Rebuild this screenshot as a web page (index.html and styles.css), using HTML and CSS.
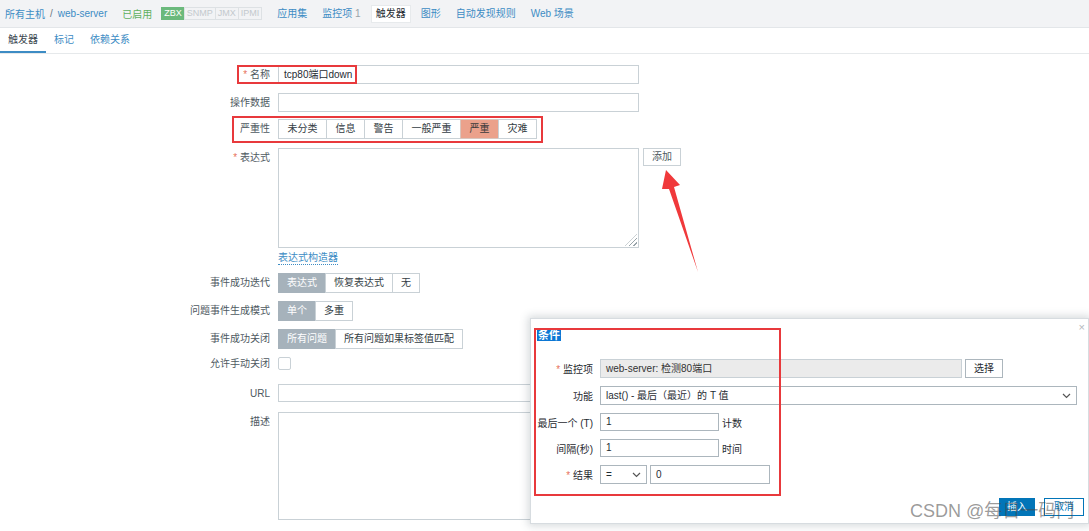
FILE: index.html
```html
<!DOCTYPE html>
<html lang="zh-CN">
<head>
<meta charset="utf-8">
<title>触发器</title>
<link rel="stylesheet" href="styles.css">
</head>
<body>
<header class="hostnav">
  <a class="crumb">所有主机</a><span class="sep">/</span><a class="crumb">web-server</a>
  <span class="status">已启用</span>
  <span class="badges"><span class="badge on">ZBX</span><span class="badge">SNMP</span><span class="badge">JMX</span><span class="badge">IPMI</span></span>
  <a class="nav first">应用集</a>
  <a class="nav">监控项 <span class="count">1</span></a>
  <span class="nav active">触发器</span>
  <a class="nav">图形</a>
  <a class="nav">自动发现规则</a>
  <a class="nav">Web 场景</a>
</header>
<nav class="tabs">
  <span class="tab active">触发器</span><span class="tab">标记</span><span class="tab">依赖关系</span>
</nav>

<form class="form">
  <div class="row r-name">
    <label class="lbl"><span class="req">*</span> 名称</label>
    <div class="ctl"><div class="input w-full">tcp80端口down</div></div>
  </div>
  <div class="row r-opdata">
    <label class="lbl">操作数据</label>
    <div class="ctl"><div class="input w-full"></div></div>
  </div>
  <div class="row r-sev">
    <label class="lbl">严重性</label>
    <div class="ctl seg sev">
      <span class="opt">未分类</span><span class="opt">信息</span><span class="opt">警告</span><span class="opt">一般严重</span><span class="opt high">严重</span><span class="opt">灾难</span>
    </div>
  </div>
  <div class="row r-expr">
    <label class="lbl"><span class="req">*</span> 表达式</label>
    <div class="ctl">
      <div class="expr-line">
        <div class="textarea expr"><span class="grip"></span></div>
        <span class="btn-alt">添加</span>
      </div>
      <a class="builder">表达式构造器</a>
    </div>
  </div>
  <div class="row r-tog">
    <label class="lbl">事件成功迭代</label>
    <div class="ctl seg tog"><span class="opt sel">表达式</span><span class="opt">恢复表达式</span><span class="opt">无</span></div>
  </div>
  <div class="row r-tog">
    <label class="lbl">问题事件生成模式</label>
    <div class="ctl seg tog"><span class="opt sel">单个</span><span class="opt">多重</span></div>
  </div>
  <div class="row r-tog">
    <label class="lbl">事件成功关闭</label>
    <div class="ctl seg tog"><span class="opt sel">所有问题</span><span class="opt">所有问题如果标签值匹配</span></div>
  </div>
  <div class="row r-check">
    <label class="lbl">允许手动关闭</label>
    <div class="ctl"><span class="checkbox"></span></div>
  </div>
  <div class="row r-url">
    <label class="lbl">URL</label>
    <div class="ctl"><div class="input w-full url"></div></div>
  </div>
  <div class="row r-desc">
    <label class="lbl">描述</label>
    <div class="ctl"><div class="textarea desc"></div></div>
  </div>
</form>

<span class="mark mark-name"></span>
<span class="mark mark-sev"></span>
<svg class="arrow" width="50" height="110" viewBox="0 0 50 110">
  <polygon points="17,0 31,15 25,17 49,102 20,19 13,19" fill="#f0393b"/>
</svg>

<section class="dialog">
  <span class="close">×</span>
  <div class="dlg-title"><span class="hl">条件</span></div>
  <div class="dlg-body">
    <div class="drow">
      <label class="dlbl"><span class="req">*</span> 监控项</label>
      <div class="input ro item">web-server: 检测80端口</div>
      <span class="btn-alt pick">选择</span>
    </div>
    <div class="drow">
      <label class="dlbl">功能</label>
      <div class="input select func">last() - 最后（最近）的 T 值
        <svg class="chev" width="9" height="6" viewBox="0 0 9 6"><polyline points="1,1 4.5,4.5 8,1" fill="none" stroke="#555" stroke-width="1.2"/></svg>
      </div>
    </div>
    <div class="drow">
      <label class="dlbl">最后一个 (T)</label>
      <div class="input num">1</div>
      <span class="unit">计数</span>
    </div>
    <div class="drow">
      <label class="dlbl">间隔(秒)</label>
      <div class="input num">1</div>
      <span class="unit">时间</span>
    </div>
    <div class="drow">
      <label class="dlbl"><span class="req">*</span> 结果</label>
      <div class="input select op">=
        <svg class="chev" width="9" height="6" viewBox="0 0 9 6"><polyline points="1,1 4.5,4.5 8,1" fill="none" stroke="#555" stroke-width="1.2"/></svg>
      </div>
      <div class="input val">0</div>
    </div>
  </div>
  <div class="dlg-foot">
    <span class="btn primary">插入</span>
    <span class="btn outline">取消</span>
  </div>
</section>
<span class="mark mark-dlg"></span>

<div class="watermark">CSDN @每日一码门</div>
</body>
</html>
```

FILE: styles.css
```css
* { box-sizing: border-box; }
html, body { margin: 0; padding: 0; }
body {
  width: 1089px;
  height: 531px;
  overflow: hidden;
  position: relative;
  background: #fff;
  color: #1f2c33;
  font-family: "Liberation Sans", "Noto Sans CJK SC", sans-serif;
  font-size: 10px;
}
a { color: #3d8cc4; text-decoration: none; }

/* header */
.hostnav {
  display: flex;
  align-items: center;
  height: 28px;
  padding-left: 5px;
  background: #f2f3f5;
  border-bottom: 1px solid #e3e6e9;
}
.crumb { color: #3d8cc4; }
.sep { margin: 0 5px; color: #6b7780; }
.status { margin-left: 15px; color: #5fb05f; }
.badges { display: flex; margin-left: 9px; }
.badge {
  height: 13px;
  line-height: 11px;
  padding: 0 2px;
  border: 1px solid #dde1e4;
  margin-left: -1px;
  color: #c3c9cd;
  font-size: 9px;
}
.badge.on { background: #6bb97c; border-color: #6bb97c; color: #fff; margin-left: 0; }
.nav {
  padding: 3px 5px;
  margin-left: 5px;
  color: #3d8cc4;
  line-height: 12px;
}
.nav.first { margin-left: 10px; }
.nav.active { background: #fff; color: #1f2c33; border: 1px solid #e7eaec; padding: 2px 4px; margin-left: 5px; }
.count { color: #9aa3a9; }

/* tabs */
.tabs {
  display: flex;
  height: 26px;
  border-bottom: 1px solid #e6e9eb;
}
.tab {
  padding: 0 8px;
  line-height: 24px;
  color: #3d8cc4;
  border-bottom: 2px solid transparent;
}
.tab.active { color: #3c4850; border-bottom-color: #3d8cc4; }

/* form */
.form { margin-top: 11px; }
.row { display: flex; align-items: flex-start; }
.lbl {
  width: 270px;
  margin-right: 8px;
  text-align: right;
  line-height: 19px;
  color: #4e5961;
  white-space: nowrap;
}
.req { color: #e8735c; }
.ctl { display: flex; flex-direction: column; }
.input {
  height: 19px;
  line-height: 17px;
  border: 1px solid #c9d1d6;
  padding: 0 5px;
  background: #fff;
  color: #1f2c33;
  white-space: nowrap;
  overflow: hidden;
}
.w-full { width: 361px; }
.r-name { margin-bottom: 9px; }
.r-opdata { margin-bottom: 7px; }
.r-sev { margin-bottom: 9px; }
.r-expr { margin-bottom: 8px; }
.r-tog { margin-bottom: 8px; }
.r-check { margin-bottom: 14px; height: 13px; }
.r-check .lbl { line-height: 13px; }
.r-url { margin-bottom: 9px; }
.url { height: 18px; width: 400px; }

.seg { flex-direction: row; }
.seg .opt {
  height: 20px;
  line-height: 18px;
  padding: 0 8px;
  border: 1px solid #c9d1d6;
  margin-left: -1px;
  background: #fff;
  color: #333d44;
  white-space: nowrap;
}
.seg .opt:first-child { margin-left: 0; }
.sev .opt { padding: 0 8.5px; }
.sev .opt.high { background: #eba18b; border-color: #d9c5bd; color: #3b3b3b; }
.r-sev .lbl { line-height: 20px; }
.r-tog .lbl { line-height: 20px; }
.tog .opt.sel { background: #a6b2bb; border-color: #a6b2bb; color: #fff; }

.expr-line { display: flex; align-items: flex-start; }
.textarea { border: 1px solid #c9d1d6; background: #fff; position: relative; }
.expr { width: 361px; height: 100px; }
.desc { width: 400px; height: 108px; }
.grip {
  position: absolute;
  right: 1px;
  bottom: 1px;
  width: 12px;
  height: 12px;
  background: repeating-linear-gradient(135deg, transparent 0 2px, #9aa5ab 2px 3px);
  clip-path: polygon(100% 0, 100% 100%, 0 100%);
}
.btn-alt {
  margin-left: 4px;
  height: 18px;
  line-height: 16px;
  padding: 0 8px;
  border: 1px solid #c9d1d6;
  background: #fff;
  color: #4e5961;
  white-space: nowrap;
}
.builder {
  align-self: flex-start;
  margin-top: 3px;
  line-height: 13px;
  color: #3d8cc4;
  border-bottom: 1px dotted #3d8cc4;
}
.checkbox {
  display: block;
  width: 13px;
  height: 13px;
  border: 1px solid #c9d1d6;
  border-radius: 2px;
  background: #fff;
}

/* annotations */
.mark { position: absolute; border: 2px solid #e8393c; pointer-events: none; }
.mark-name { left: 237px; top: 65px; width: 120px; height: 19px; }
.mark-sev { left: 232px; top: 116px; width: 311px; height: 27px; }
.mark-dlg { left: 534px; top: 328px; width: 247px; height: 168px; }
.arrow { position: absolute; left: 649px; top: 170px; }

/* dialog */
.dialog {
  position: absolute;
  left: 530px;
  top: 318px;
  width: 559px;
  height: 206px;
  background: #fff;
  border: 1px solid #d7dce0;
  box-shadow: 0 0 8px 2px rgba(70, 85, 95, 0.22);
  display: flex;
  flex-direction: column;
}
.close { position: absolute; right: 3px; top: 2px; color: #b4b9bd; font-size: 11px; line-height: 12px; }
.dlg-title { padding: 9px 0 0 6px; line-height: 14px; }
.hl { background: #0c77d4; color: #fff; font-weight: bold; font-size: 11px; padding: 0 1px; }
.dlg-body { margin-top: 16px; }
.drow { display: flex; align-items: center; margin-bottom: 8px; }
.dlbl {
  width: 69px;
  padding-right: 7px;
  text-align: right;
  color: #1f2a30;
  white-space: nowrap;
  font-size: 10px;
}
.drow .input { border-color: #acb6bd; }
.ro { background: #ebebeb; width: 362px; border-color: #c9d1d6 !important; color: #333; }
.pick { margin-left: 3px; height: 19px; line-height: 17px; color: #1f2a30; border-color: #acb6bd; }
.select { position: relative; padding-right: 18px; }
.chev { position: absolute; right: 5px; top: 6px; }
.func { width: 477px; }
.num { width: 119px; height: 18px; line-height: 16px; }
.unit { margin-left: 3px; color: #1f2a30; }
.op { width: 47px; }
.val { width: 120px; margin-left: 3px; }
.dlg-foot {
  margin-top: auto;
  display: flex;
  justify-content: flex-end;
  padding: 0 4px 7px 0;
}
.btn { height: 18px; line-height: 16px; padding: 0 7px; border: 1px solid #0275b8; white-space: nowrap; }
.primary { background: #0275b8; color: #fff; }
.outline { background: #fff; color: #0275b8; margin-left: 9px; padding: 0 9px; }

.watermark {
  position: absolute;
  left: 910px;
  top: 499px;
  font-size: 18px;
  line-height: 24px;
  color: rgba(70, 70, 70, 0.55);
  white-space: nowrap;
  pointer-events: none;
}
```
